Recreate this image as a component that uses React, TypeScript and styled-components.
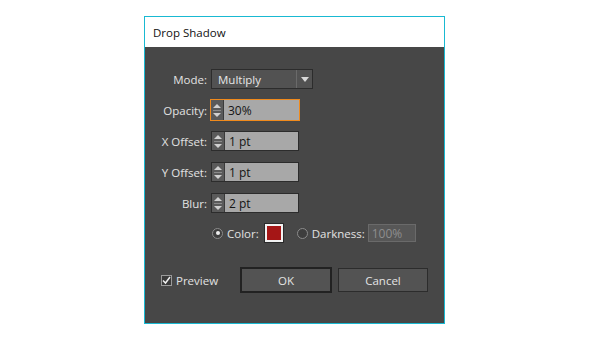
import React, { useState } from 'react'
import styled, { createGlobalStyle } from 'styled-components'

const GlobalStyle = createGlobalStyle`
  html, body {
    margin: 0;
    padding: 0;
    background: #ffffff;
  }
  body {
    font-family: "Open Sans", "Noto Sans", Arial, sans-serif;
  }
`

const Page = styled.div`
  width: 600px;
  height: 345px;
  padding: 16px 0 0 144px;
  box-sizing: border-box;
`

const Dialog = styled.section`
  width: 301px;
  height: 308px;
  box-sizing: border-box;
  border: 1px solid #19b9d2;
  background: #474747;
  display: flex;
  flex-direction: column;
`

const TitleBar = styled.header`
  height: 30px;
  background: #ffffff;
  display: flex;
  align-items: center;
  padding-left: 8px;
  font-size: 11.5px;
  color: #111;
`

const Body = styled.div`
  padding: 22px 0 0 0;
  display: flex;
  flex-direction: column;
`

const Form = styled.div`
  display: grid;
  grid-template-columns: 62px auto;
  column-gap: 4px;
  row-gap: 11px;
  align-items: center;
`

const Label = styled.label`
  justify-self: end;
  font-size: 11.5px;
  color: #e2e2e2;
  white-space: nowrap;
`

const Select = styled.div`
  width: 102px;
  height: 20px;
  box-sizing: border-box;
  border: 1px solid #2c2c2c;
  background: #525252;
  display: flex;
  align-items: center;
  font-size: 11.5px;
  color: #e6e6e6;

  span {
    flex: 1;
    padding-left: 6px;
  }
`

const SelectArrow = styled.div`
  width: 15px;
  height: 100%;
  border-left: 1px solid #6a6a6a;
  display: flex;
  align-items: center;
  justify-content: center;

  &::after {
    content: '';
    border-left: 4px solid transparent;
    border-right: 4px solid transparent;
    border-top: 5px solid #d8d8d8;
  }
`

const Spinner = styled.div<{ $focused?: boolean }>`
  width: ${p => (p.$focused ? 90 : 88)}px;
  height: ${p => (p.$focused ? 22 : 20)}px;
  margin: ${p => (p.$focused ? '-1px 0 -1px -1px' : '0')};
  box-sizing: border-box;
  border: 1px solid ${p => (p.$focused ? '#f08a1c' : '#2c2c2c')};
  display: flex;
`

const Arrows = styled.div`
  width: 12px;
  background: #5a5a5a;
  border-right: 1px solid #3a3a3a;
  display: flex;
  flex-direction: column;
  align-items: center;
  justify-content: center;
  gap: 2px;
`

const Tri = styled.div<{ $down?: boolean }>`
  border-left: 4px solid transparent;
  border-right: 4px solid transparent;
  ${p => (p.$down ? 'border-top: 4px solid #d0d0d0;' : 'border-bottom: 4px solid #d0d0d0;')}
`

const Rule = styled.div`
  width: 8px;
  height: 1px;
  background: #8a8a8a;
`

const Field = styled.div`
  flex: 1;
  background: #a8a8a8;
  display: flex;
  align-items: center;
  padding-left: 4px;
  font-size: 12px;
  color: #141414;
`

const ColorRow = styled.div`
  grid-column: 2;
  display: flex;
  align-items: center;
  margin-left: 1px;
  font-size: 11.5px;
  color: #e2e2e2;
`

const Radio = styled.span<{ $on?: boolean }>`
  width: 11px;
  height: 11px;
  border-radius: 50%;
  box-sizing: border-box;
  border: 1px solid #8c8c8c;
  background: #3e3e3e;
  margin-right: 4px;
  display: flex;
  align-items: center;
  justify-content: center;

  &::after {
    content: '';
    width: 4px;
    height: 4px;
    border-radius: 50%;
    background: ${p => (p.$on ? '#eeeeee' : 'transparent')};
  }
`

const Swatch = styled.span`
  width: 18px;
  height: 18px;
  box-sizing: border-box;
  border: 2px solid #f2f2f2;
  outline: 1px solid #2a2a2a;
  background: #a51616;
  margin: 0 14px 0 6px;
`

const Disabled = styled.div`
  width: 48px;
  height: 18px;
  box-sizing: border-box;
  border: 1px solid #6a6a6a;
  background: #575757;
  margin-left: 3px;
  padding-left: 3px;
  display: flex;
  align-items: center;
  font-size: 12px;
  color: #8e8e8e;
`

const Footer = styled.div`
  display: flex;
  align-items: center;
  padding-left: 16px;
  margin-top: 25px;
`

const Check = styled.label`
  width: 79px;
  display: flex;
  align-items: center;
  gap: 4px;
  font-size: 11.5px;
  color: #e2e2e2;
`

const Box = styled.span`
  width: 11px;
  height: 11px;
  box-sizing: border-box;
  border: 1px solid #9a9a9a;
  background: #3a3a3a;
  display: flex;
  align-items: center;
  justify-content: center;
`

const Button = styled.button<{ $primary?: boolean }>`
  height: ${p => (p.$primary ? 26 : 24)}px;
  width: ${p => (p.$primary ? 92 : 90)}px;
  margin-right: ${p => (p.$primary ? 6 : 0)}px;
  box-sizing: border-box;
  border: ${p => (p.$primary ? '2px solid #222' : '1px solid #2c2c2c')};
  background: #535353;
  color: #e4e4e4;
  font-family: inherit;
  font-size: 11.5px;
  padding: 0;
`

const Spin = ({ value, focused }: { value: string; focused?: boolean }) => (
  <Spinner $focused={focused}>
    <Arrows>
      <Tri />
      <Rule />
      <Tri $down />
    </Arrows>
    <Field>{value}</Field>
  </Spinner>
)

export default function App() {
  const [preview] = useState(true)
  return (
    <Page>
      <GlobalStyle />
      <Dialog>
        <TitleBar>Drop Shadow</TitleBar>
        <Body>
          <Form>
            <Label>Mode:</Label>
            <Select>
              <span>Multiply</span>
              <SelectArrow />
            </Select>
            <Label>Opacity:</Label>
            <Spin value="30%" focused />
            <Label>X Offset:</Label>
            <Spin value="1 pt" />
            <Label>Y Offset:</Label>
            <Spin value="1 pt" />
            <Label>Blur:</Label>
            <Spin value="2 pt" />
            <ColorRow>
              <Radio $on />
              Color:
              <Swatch />
              <Radio />
              Darkness:
              <Disabled>100%</Disabled>
            </ColorRow>
          </Form>
          <Footer>
            <Check>
              <Box>
                {preview && (
                  <svg width="9" height="9" viewBox="0 0 9 9">
                    <path d="M1 4.5 L3.5 7 L8 1" fill="none" stroke="#f0f0f0" strokeWidth="1.5" />
                  </svg>
                )}
              </Box>
              Preview
            </Check>
            <Button $primary>OK</Button>
            <Button>Cancel</Button>
          </Footer>
        </Body>
      </Dialog>
    </Page>
  )
}
